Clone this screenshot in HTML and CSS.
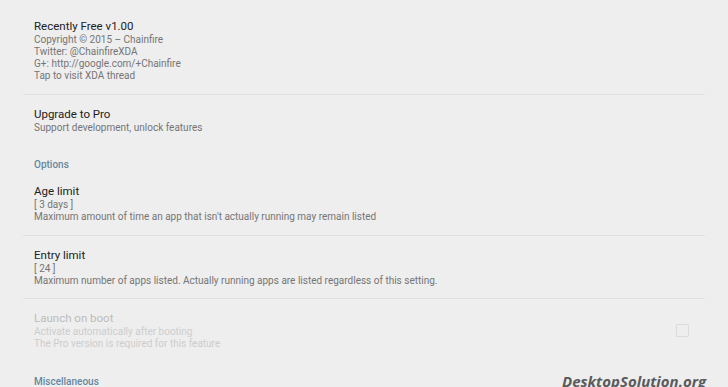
FILE: index.html
```html
<!DOCTYPE html>
<html lang="en">
<head>
    <meta charset="UTF-8">
    <meta name="viewport" content="width=device-width, initial-scale=1.0">
    <title>Recently Free - Settings</title>
    <link rel="stylesheet" href="styles.css">
</head>
<body>
    <div class="prefs">
        <div class="pref divided">
            <div class="pref-text">
                <div class="pref-title">Recently Free v1.00</div>
                <div class="pref-summary">Copyright © 2015 – Chainfire</div>
                <div class="pref-summary">Twitter: @ChainfireXDA</div>
                <div class="pref-summary">G+: http://google.com/+Chainfire</div>
                <div class="pref-summary">Tap to visit XDA thread</div>
            </div>
        </div>
        <div class="pref">
            <div class="pref-text">
                <div class="pref-title">Upgrade to Pro</div>
                <div class="pref-summary">Support development, unlock features</div>
            </div>
        </div>

        <div class="category">Options</div>

        <div class="pref divided">
            <div class="pref-text">
                <div class="pref-title">Age limit</div>
                <div class="pref-summary">[ 3 days ]</div>
                <div class="pref-summary">Maximum amount of time an app that isn't actually running may remain listed</div>
            </div>
        </div>
        <div class="pref divided">
            <div class="pref-text">
                <div class="pref-title">Entry limit</div>
                <div class="pref-summary">[ 24 ]</div>
                <div class="pref-summary">Maximum number of apps listed. Actually running apps are listed regardless of this setting.</div>
            </div>
        </div>
        <div class="pref disabled">
            <div class="pref-text">
                <div class="pref-title">Launch on boot</div>
                <div class="pref-summary">Activate automatically after booting</div>
                <div class="pref-summary">The Pro version is required for this feature</div>
            </div>
            <span class="checkbox"></span>
        </div>

        <div class="category">Miscellaneous</div>
    </div>
    <div class="watermark">DesktopSolution.org</div>
</body>
</html>
```

FILE: styles.css
```css
body {
    margin: 0;
    background-color: #eeeeee;
    font-family: Roboto, "Liberation Sans", sans-serif;
    overflow: hidden;
    height: 387px;
    position: relative;
}

.prefs {
    margin: 0 23px;
    padding-top: 7px;
}

.pref {
    display: flex;
    align-items: center;
    padding: 11px 16px 11.5px 11px;
}

.pref.divided {
    border-bottom: 1px solid #e0e0e0;
}

.pref-text {
    flex: 1;
}

.pref-title {
    font-size: 11.5px;
    line-height: 16px;
    color: #212121;
}

.pref-summary {
    font-size: 10px;
    line-height: 12px;
    color: #757575;
}

.disabled .pref-title {
    color: #bcbcbc;
}

.disabled .pref-summary {
    color: #cdcdcd;
}

.checkbox {
    width: 11px;
    height: 11px;
    border: 1px solid #dcdcdc;
    border-radius: 1px;
}

.category {
    margin-top: 14px;
    padding: 0 11px 1px;
    font-size: 10px;
    line-height: 12px;
    font-weight: 500;
    color: #6488a0;
}

.watermark {
    position: absolute;
    left: 562px;
    top: 371px;
    font-family: "Open Sans", sans-serif;
    font-weight: 700;
    font-style: italic;
    font-size: 15px;
    line-height: 20px;
    color: #5b5b5b;
    white-space: nowrap;
}
```
